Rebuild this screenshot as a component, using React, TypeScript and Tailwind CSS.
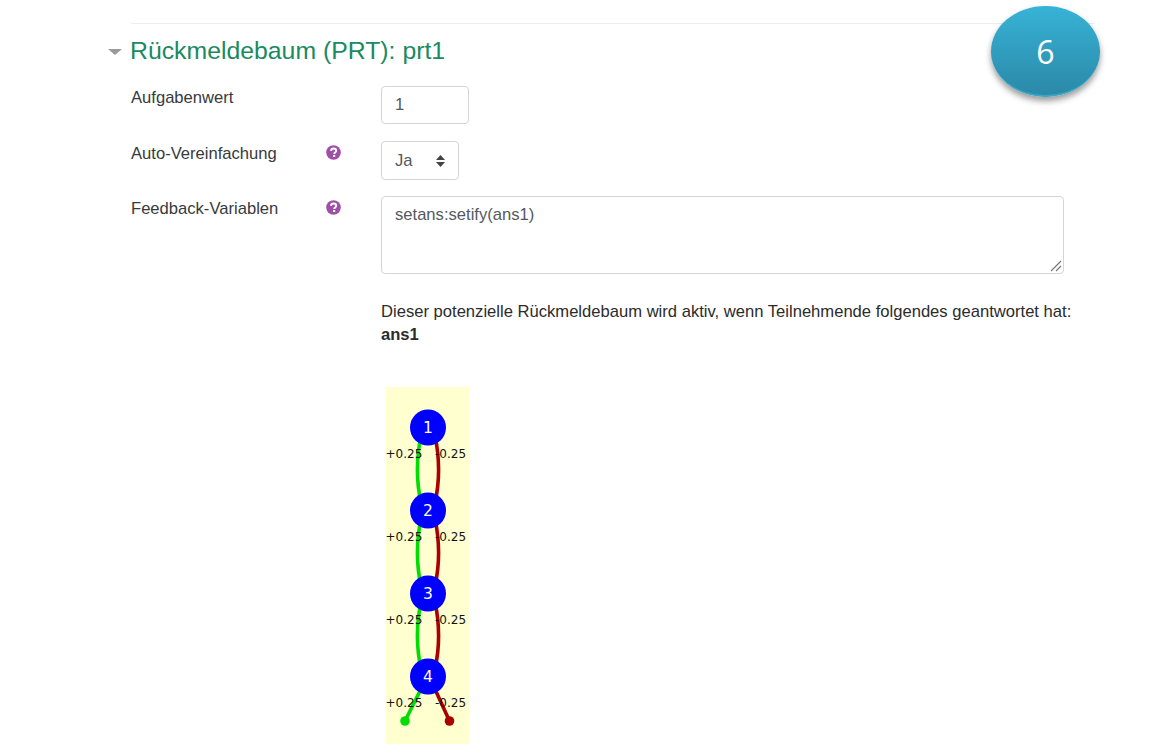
const sans = "font-['Liberation_Sans',Arial,sans-serif]";

function Help() {
  return (
    <svg width="15" height="15" viewBox="0 0 15 15" className="block">
      <circle cx="7.5" cy="7.5" r="7.3" fill="#a04fa8" />
      <path d="M5 5.9C5.1 4.4 6.2 3.5 7.6 3.5C9.1 3.5 10.2 4.4 10.2 5.7C10.2 7.4 8.2 7.4 8.2 8.9" fill="none" stroke="#fff" strokeWidth="1.9" />
      <rect x="7.1" y="10" width="2.1" height="2" fill="#fff" />
    </svg>
  );
}

function Tree() {
  const ys = [40.5, 123.5, 206.5, 289.5];
  return (
    <svg width="83" height="357" viewBox="0 0 83 357" className="block bg-[#ffffd0]">
      {ys.slice(0, 3).map((y) => (
        <g key={y} fill="none" strokeWidth="3.6">
          <path d={`M35 ${y + 8}C30.5 ${y + 30} 30.5 ${y + 55} 35 ${y + 75}`} stroke="#00dd00" />
          <path d={`M49 ${y + 8}C53.5 ${y + 30} 53.5 ${y + 55} 49 ${y + 75}`} stroke="#aa0000" />
        </g>
      ))}
      <path d="M36 300L19 334" fill="none" stroke="#00dd00" strokeWidth="3.6" />
      <path d="M48 300L63.5 334" fill="none" stroke="#aa0000" strokeWidth="3.6" />
      <circle cx="19" cy="334" r="4.8" fill="#00dd00" />
      <circle cx="63.5" cy="334" r="4.8" fill="#aa0000" />
      {ys.map((y, i) => (
        <g key={y}>
          <circle cx="42" cy={y} r="18" fill="#0000ff" />
          <text x="42" y={y + 5} textAnchor="middle" fill="#fff" fontSize="15.5" fontFamily="'DejaVu Sans',sans-serif">{i + 1}</text>
          <text x="-0.5" y={y + 30} fill="#111" fontSize="12" fontFamily="'DejaVu Sans',sans-serif">+0.25</text>
          <text x="49" y={y + 30} fill="#111" fontSize="12" fontFamily="'DejaVu Sans',sans-serif">-0.25</text>
        </g>
      ))}
    </svg>
  );
}

export default function App() {
  return (
    <div className={`${sans} relative h-[746px] w-[1150px] overflow-hidden bg-white pl-[131px] pt-[23px] text-[16.6px] text-[#373a3c]`}>
      <div className="mr-[55px] border-t border-[#eeeeee]" />
      <div className="relative mt-[11px] h-[32px]">
        <span className="absolute left-[-23px] top-[14px] h-0 w-0 border-x-[7px] border-t-[6px] border-x-transparent border-t-[#999999]" />
        <h2 className="ml-[-1px] text-[24.8px] leading-[32px] text-[#1a8a5f]">Rückmeldebaum (PRT): prt1</h2>
      </div>
      <div className="mt-[19px] flex h-[38px]">
        <div className="w-[250px] pt-[2px] leading-[20px]">Aufgabenwert</div>
        <div className="flex h-[38px] w-[88px] items-center rounded border border-[#d5d5d5] px-[13px] text-[#55595c]">1</div>
      </div>
      <div className="mt-[17px] flex h-[39px]">
        <div className="flex w-[250px] items-start pt-[3px]">
          <span className="w-[195px] leading-[20px]">Auto-Vereinfachung</span>
          <span className="pt-[1px]"><Help /></span>
        </div>
        <div className="flex h-[39px] w-[78px] items-center justify-between rounded border border-[#d5d5d5] pl-[13px] pr-[13px] text-[#55595c]">
          <span className="pt-[1px]">Ja</span>
          <svg width="9" height="12" viewBox="0 0 9 12"><path d="M4.5 0L9 5H0ZM4.5 12L0 7H9Z" fill="#444" /></svg>
        </div>
      </div>
      <div className="mt-[16px] flex">
        <div className="flex w-[250px] items-start pt-[3px]">
          <span className="w-[195px] leading-[20px]">Feedback-Variablen</span>
          <span className="pt-[1px]"><Help /></span>
        </div>
        <div className="min-w-0">
          <div className="relative h-[78px] w-[683px] rounded border border-[#d5d5d5] px-[13px] pb-[6px] pt-[7px] leading-[22px] text-[#55595c]">
            setans:setify(ans1)
            <svg width="12" height="12" viewBox="0 0 12 12" className="absolute bottom-[1px] right-[1px]">
              <path d="M1 11L11 1M6 11L11 6" stroke="#777" strokeWidth="1.2" fill="none" />
            </svg>
          </div>
          <p className="mt-[26px] w-[700px] leading-[23px] text-[#2b2b2b]">
            Dieser potenzielle Rückmeldebaum wird aktiv, wenn Teilnehmende folgendes geantwortet hat: <strong>ans1</strong>
          </p>
          <div className="ml-[5px] mt-[41px]"><Tree /></div>
        </div>
      </div>
      <div className="absolute left-[991px] top-[6px] flex h-[91px] w-[109px] items-center justify-center rounded-[50%] border-b-2 border-[#3aa5c4] bg-gradient-to-b from-[#37b3d6] to-[#2b89a8] pt-[2px] font-['Open_Sans',sans-serif] text-[32px] text-white shadow-[0_4px_6px_rgba(0,0,0,0.4)]">
        6
      </div>
    </div>
  );
}
